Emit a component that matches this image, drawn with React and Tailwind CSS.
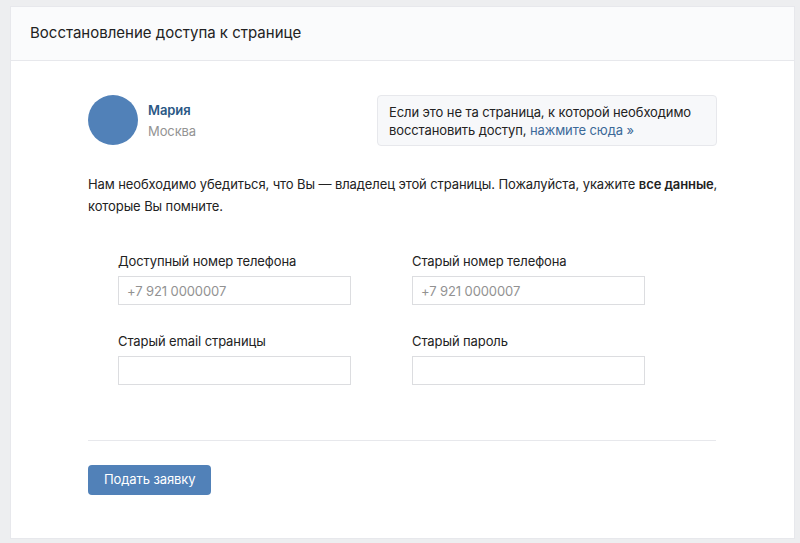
import React from 'react';

const FIELDS = [
  { label: 'Доступный номер телефона', placeholder: '+7 921 0000007' },
  { label: 'Старый номер телефона', placeholder: '+7 921 0000007' },
  { label: 'Старый email страницы', placeholder: '' },
  { label: 'Старый пароль', placeholder: '' },
];

function Field({ label, placeholder }) {
  return (
    <div className="flex flex-col">
      <label className="text-[13px] leading-[18px] text-[#222]">{label}</label>
      <input
        type="text"
        placeholder={placeholder}
        className="mt-[6px] h-[29px] w-[233px] border border-[#dcdde0] bg-white px-[8px] text-[13px] text-[#222] outline-none placeholder:text-[#929292]"
      />
    </div>
  );
}

export default function App() {
  return (
    <div
      className="min-h-[543px] bg-[#edeef0] pl-[10px] pr-[5px] pt-[6px] pb-[4px] tracking-[-0.1px]"
      style={{ fontFamily: 'Inter, "Noto Sans", sans-serif' }}
    >
      <div className="flex h-[533px] flex-col border border-[#e7e8ec] bg-white">
        <div className="flex h-[54px] items-center border-b border-[#e7e8ec] bg-[#fafbfc] px-[19px]">
          <h1 className="text-[15px] font-normal tracking-normal text-[#222]">Восстановление доступа к странице</h1>
        </div>

        <div className="w-[720px] pl-[77px] pt-[34px]">
          <div className="flex w-[629px] items-start justify-between">
            <div className="flex items-center">
              <div className="h-[50px] w-[50px] rounded-full bg-[#5181b8]" />
              <div className="ml-[10px] flex flex-col">
                <span className="text-[13px] font-semibold leading-[18px] text-[#2a5885]">Мария</span>
                <span className="mt-[3px] text-[13px] leading-[18px] text-[#939393]">Москва</span>
              </div>
            </div>
            <div className="w-[340px] rounded-[4px] border border-[#e7e8ec] bg-[#f7f8fa] px-[11px] pt-[7px] pb-[6px] text-[13px] leading-[18px] text-[#222]">
              Если это не та страница, к которой необходимо восстановить доступ,{' '}
              <a href="#" className="text-[#3b6998]">нажмите сюда »</a>
            </div>
          </div>

          <p className="mt-[27px] text-[13px] leading-[22px] text-[#222]">
            Нам необходимо убедиться, что Вы — владелец этой страницы. Пожалуйста, укажите{' '}
            <b className="font-semibold">все данные</b>,
            <br />
            которые Вы помните.
          </p>

          <div className="mt-[35px] grid grid-cols-[294px_1fr] gap-y-[27px] pl-[30px]">
            {FIELDS.map((f) => (
              <Field key={f.label} label={f.label} placeholder={f.placeholder} />
            ))}
          </div>

          <div className="mt-[55px] h-px w-[628px] bg-[#e7e8ec]" />

          <button className="mt-[24px] h-[30px] rounded-[4px] bg-[#5181b8] px-[16px] text-[13px] text-white">
            Подать заявку
          </button>
        </div>
      </div>
    </div>
  );
}
